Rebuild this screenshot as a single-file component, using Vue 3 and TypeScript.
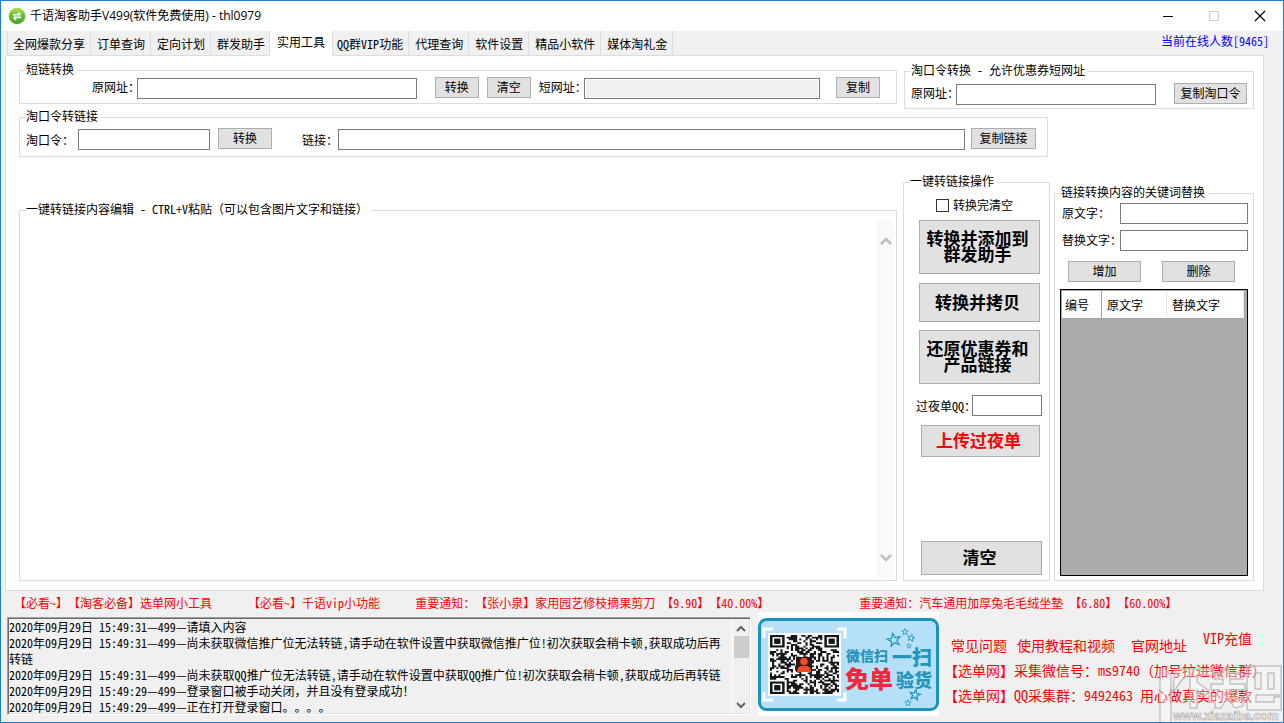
<script setup lang="ts">
import { h, ref } from 'vue'

interface QrCell {
  x: number
  y: number
}

// Latin runs are set in half-width glyphs, two to one ideograph.
const Mixed = (props: { text: string }) =>
  props.text
    .split(/([!-~]+(?: +[!-~]+)*| +)/)
    .filter((part) => part !== '')
    .map((part) => (/^[ -~]+$/.test(part) ? h('span', { class: 'half' }, part) : part))
Mixed.props = ['text']

const tabs: string[] = [
  '全网爆款分享',
  '订单查询',
  '定向计划',
  '群发助手',
  '实用工具',
  'QQ群VIP功能',
  '代理查询',
  '软件设置',
  '精品小软件',
  '媒体淘礼金',
]
const activeTab = ref(4)

const longUrl = ref('')
const shortUrl = ref('')
const couponUrl = ref('')
const token = ref('')
const tokenLink = ref('')
const editorText = ref('')
const clearAfter = ref(false)
const overnightQq = ref('')
const sourceWord = ref('')
const targetWord = ref('')

const notices: string[] = [
  '【必看~】【淘客必备】选单网小工具',
  '【必看~】千语vip小功能',
  '重要通知：【张小泉】家用园艺修枝摘果剪刀 【9.90】【40.00%】',
  '重要通知：汽车通用加厚兔毛毛绒坐墊 【6.80】【60.00%】',
]

const logLines: string[] = [
  '2020年09月29日 15:49:31—499—请填入内容',
  '2020年09月29日 15:49:31—499—尚未获取微信推广位无法转链,请手动在软件设置中获取微信推广位!初次获取会稍卡顿,获取成功后再转链',
  '2020年09月29日 15:49:31—499—尚未获取QQ推广位无法转链,请手动在软件设置中获取QQ推广位!初次获取会稍卡顿,获取成功后再转链',
  '2020年09月29日 15:49:29—499—登录窗口被手动关闭，并且没有登录成功！',
  '2020年09月29日 15:49:29—499—正在打开登录窗口。。。。',
]

const QR_SIZE = 33

function inFinder(x: number, y: number): boolean {
  const edge = QR_SIZE - 8
  return (x < 8 && y < 8) || (x >= edge && y < 8) || (x < 8 && y >= edge)
}

function inCentre(x: number, y: number): boolean {
  return x > 12 && x < 20 && y > 12 && y < 20
}

function buildQr(): QrCell[] {
  const cells: QrCell[] = []
  let seed = 9465
  for (let y = 0; y < QR_SIZE; y++) {
    for (let x = 0; x < QR_SIZE; x++) {
      seed = (seed * 1103515245 + 12345) % 2147483648
      if (!inFinder(x, y) && !inCentre(x, y) && seed / 2147483648 < 0.52) cells.push({ x, y })
    }
  }
  return cells
}

const qrPath = buildQr()
  .map((c) => `M${c.x} ${c.y}h1v1h-1z`)
  .join('')
const finders: QrCell[] = [
  { x: 0, y: 0 },
  { x: QR_SIZE - 7, y: 0 },
  { x: 0, y: QR_SIZE - 7 },
]
const starPath = 'M0-10L2.6-3.2 9.5-3.1 4 1.2 5.9 8.1 0 4.1-5.9 8.1-4 1.2-9.5-3.1-2.6-3.2Z'
</script>

<template>
  <div class="window">
    <header class="titlebar">
      <svg class="app-icon" width="18" height="18" viewBox="0 0 18 18" aria-hidden="true">
        <defs>
          <linearGradient id="ball" x1="0" y1="0" x2="0" y2="1">
            <stop offset="0" stop-color="#b4dc4a" />
            <stop offset="0.5" stop-color="#62bd36" />
            <stop offset="1" stop-color="#3fa32c" />
          </linearGradient>
        </defs>
        <circle cx="9" cy="9" r="8.3" fill="url(#ball)" />
        <path d="M5 7.8h7.4M10 5.4l2.6 2.4M13 10.4H5.6M8 12.8l-2.6-2.4" fill="none" stroke="#fff" stroke-width="1.6" />
      </svg>
      <h1 class="title">千语淘客助手V499(软件免费使用) - thl0979</h1>
      <div class="controls">
        <button type="button" class="ctl" aria-label="最小化">
          <svg width="12" height="12" viewBox="0 0 12 12"><path d="M1 6.5h10" stroke="#000" fill="none" /></svg>
        </button>
        <button type="button" class="ctl" aria-label="最大化" disabled>
          <svg width="12" height="12" viewBox="0 0 12 12"><path d="M1.5 1.5h9v9h-9z" stroke="#ccc" fill="none" /></svg>
        </button>
        <button type="button" class="ctl" aria-label="关闭">
          <svg width="12" height="12" viewBox="0 0 12 12"><path d="M1 1l10 10M11 1L1 11" stroke="#000" stroke-width="1.2" fill="none" /></svg>
        </button>
      </div>
    </header>

    <div class="tabbar">
      <nav class="tabs" role="tablist">
        <button
          v-for="(tab, i) in tabs"
          :key="tab"
          type="button"
          role="tab"
          class="tab"
          :class="{ active: i === activeTab }"
          :aria-selected="i === activeTab"
          @click="activeTab = i"
        ><Mixed :text="tab" /></button>
      </nav>
      <span class="online"><Mixed text="当前在线人数[9465]" /></span>
    </div>

    <main class="page">
      <div class="line line-top">
        <fieldset class="group short-link">
          <legend>短链转换</legend>
          <div class="row">
            <label for="long-url">原网址：</label>
            <input id="long-url" v-model="longUrl" type="text" class="w-280" />
            <button type="button" class="btn b-44 gap-18">转换</button>
            <button type="button" class="btn b-44 gap-8">清空</button>
            <label for="short-url" class="gap-8">短网址：</label>
            <input id="short-url" v-model="shortUrl" type="text" class="w-235 locked" readonly />
            <button type="button" class="btn b-44 gap-16">复制</button>
          </div>
        </fieldset>
        <fieldset class="group coupon">
          <legend><Mixed text="淘口令转换 - 允许优惠券短网址" /></legend>
          <div class="row">
            <label for="coupon-url">原网址：</label>
            <input id="coupon-url" v-model="couponUrl" type="text" class="fill" />
            <button type="button" class="btn b-73 gap-18">复制淘口令</button>
          </div>
        </fieldset>
      </div>

      <fieldset class="group token">
        <legend>淘口令转链接</legend>
        <div class="row">
          <label for="token">淘口令：</label>
          <input id="token" v-model="token" type="text" class="w-132" />
          <button type="button" class="btn b-54 gap-8">转换</button>
          <label for="token-link" class="gap-30">链接：</label>
          <input id="token-link" v-model="tokenLink" type="text" class="fill" />
          <button type="button" class="btn b-65 gap-6">复制链接</button>
        </div>
      </fieldset>

      <div class="line line-main">
        <fieldset class="group editor">
          <legend><Mixed text="一键转链接内容编辑 - CTRL+V粘贴（可以包含图片文字和链接）" /></legend>
          <div class="editor-body">
            <textarea v-model="editorText" aria-label="一键转链接内容编辑"></textarea>
            <div class="scroll pale" aria-hidden="true">
              <svg width="12" height="8" viewBox="0 0 12 8"><path d="M1 7l5-5 5 5" fill="none" stroke="#bfbfbf" stroke-width="2.6" /></svg>
              <svg width="12" height="8" viewBox="0 0 12 8"><path d="M1 1l5 5 5-5" fill="none" stroke="#bfbfbf" stroke-width="2.6" /></svg>
            </div>
          </div>
        </fieldset>

        <fieldset class="group ops">
          <legend>一键转链接操作</legend>
          <div class="ops-body">
            <label class="check"><input v-model="clearAfter" type="checkbox" />转换完清空</label>
            <button type="button" class="btn big tall">转换并添加到<br />群发助手</button>
            <button type="button" class="btn big mid">转换并拷贝</button>
            <button type="button" class="btn big tall">还原优惠券和<br />产品链接</button>
            <div class="qq-row">
              <label for="qq"><Mixed text="过夜单QQ：" /></label>
              <input id="qq" v-model="overnightQq" type="text" class="fill" />
            </div>
            <button type="button" class="btn big upload">上传过夜单</button>
            <button type="button" class="btn big clear">清空</button>
          </div>
        </fieldset>

        <fieldset class="group replace">
          <legend>链接转换内容的关键词替换</legend>
          <div class="replace-body">
            <div class="pair">
              <label for="src-word">原文字：</label>
              <input id="src-word" v-model="sourceWord" type="text" />
            </div>
            <div class="pair">
              <label for="dst-word">替换文字：</label>
              <input id="dst-word" v-model="targetWord" type="text" />
            </div>
            <div class="pair-buttons">
              <button type="button" class="btn b-73">增加</button>
              <button type="button" class="btn b-73">删除</button>
            </div>
            <div class="grid">
              <table>
                <thead>
                  <tr>
                    <th class="c-no">编号</th>
                    <th class="c-src">原文字</th>
                    <th class="c-dst">替换文字</th>
                  </tr>
                </thead>
              </table>
            </div>
          </div>
        </fieldset>
      </div>
    </main>

    <div class="notices">
      <a v-for="n in notices" :key="n" href="#"><Mixed :text="n" /></a>
    </div>

    <footer class="bottom">
      <div class="log">
        <div class="log-text" role="log" aria-label="运行日志">
          <p v-for="(l, i) in logLines" :key="i"><Mixed :text="l" /></p>
        </div>
        <div class="scroll" aria-hidden="true">
          <svg width="10" height="7" viewBox="0 0 10 7"><path d="M1 6l4-4 4 4" fill="none" stroke="#606060" stroke-width="2" /></svg>
          <div class="thumb"></div>
          <svg width="10" height="7" viewBox="0 0 10 7"><path d="M1 1l4 4 4-4" fill="none" stroke="#606060" stroke-width="2" /></svg>
        </div>
      </div>

      <svg class="banner" width="181" height="104" viewBox="0 0 181 104" role="img" aria-label="微信扫一扫 免单验货">
        <rect width="181" height="104" fill="#fff" />
        <rect x="1.5" y="7.5" width="178" height="90" rx="7" fill="#b5e0f8" stroke="#1c93bd" stroke-width="3" />
        <path d="M6 26V17h9M79 17h8v9M87 80v8h-8M15 88H6v-8" fill="none" stroke="#fff" stroke-width="3" />
        <rect x="10" y="21" width="73" height="63" fill="#fff" />
        <svg x="12" y="23" width="69" height="59" viewBox="0 0 33 33" preserveAspectRatio="none">
          <path :d="qrPath" fill="#15171a" />
          <g v-for="(f, i) in finders" :key="i">
            <rect :x="f.x + 0.6" :y="f.y + 0.6" width="5.8" height="5.8" fill="none" stroke="#15171a" stroke-width="1.2" />
            <rect :x="f.x + 2" :y="f.y + 2" width="3" height="3" fill="#15171a" />
          </g>
        </svg>
        <rect x="38" y="45" width="16" height="15" fill="#2a1512" />
        <circle cx="46" cy="49.5" r="3.8" fill="#f04b26" />
        <path d="M39 60c0-4 2-6 5-6h4c3 0 5 2 5 6z" fill="#f04b26" />
        <text class="bt" x="88" y="49" font-size="14">微信扫</text>
        <text class="bt" x="134" y="53" font-size="20">一扫</text>
        <text class="bt red" x="87" y="76" font-size="24">免单</text>
        <text class="bt" x="138" y="75" font-size="18">验货</text>
        <g fill="none" stroke="#1c93bd">
          <path :d="starPath" transform="translate(136 28) rotate(-12) scale(.68)" stroke-width="1.8" />
          <path :d="starPath" transform="translate(147 20) scale(.34)" stroke-width="2.2" />
          <path :d="starPath" transform="translate(153 26) rotate(15) scale(.38)" stroke-width="2.2" />
          <path :d="starPath" transform="translate(151 34) scale(.26)" stroke-width="2.4" />
          <path :d="starPath" transform="translate(157 83) rotate(10) scale(.55)" stroke-width="2.2" />
          <path :d="starPath" transform="translate(150 91) scale(.34)" stroke-width="2.2" />
        </g>
      </svg>

      <div class="contact">
        <nav class="quick">
          <a href="#">常见问题</a>
          <a href="#">使用教程和视频</a>
          <a href="#">官网地址</a>
          <a href="#" class="vip"><Mixed text="VIP充值" /></a>
        </nav>
        <p><Mixed text="【选单网】采集微信号：ms9740（加号拉进微信群）" /></p>
        <p><Mixed text="【选单网】QQ采集群：9492463 用心做真实的爆款" /></p>
      </div>
    </footer>

    <svg class="mark" width="124" height="60" viewBox="0 0 124 60" aria-hidden="true">
      <g fill="#fff" fill-opacity=".3" stroke="#b4b4b4" stroke-opacity=".8" stroke-width="1.4">
        <path d="M1 60V7H6L12 14V60" />
        <path d="M16 7H54V13H38V20L50 29 46 34 38 28V46H31V14H26L14 30Z" />
        <path d="M55 11H64V6H70V11H84V17H71V22H86V28H72L78 38 84 34V44L76 46 68 36 62 46H56V40H50V34H56L60 28H52V22H64V17H55Z" />
        <path fill-rule="evenodd" d="M88 4H122V33H97V40H115V35H122V48H88ZM96 11V27H102V11ZM109 11V27H115V11Z" />
      </g>
      <text x="14" y="58">www.xiazaiba.com</text>
    </svg>
  </div>
</template>

<style>
body {
  margin: 0;
}

.half {
  font-feature-settings: "hwid" 1;
}
</style>

<style scoped>
* {
  box-sizing: border-box;
}

.window {
  position: relative;
  display: flex;
  flex-direction: column;
  min-height: 100vh;
  border: 1px solid #1a7fd4;
  background: #f0f0f0;
  color: #000;
  font-family: "Noto Sans CJK SC", sans-serif;
  font-size: 12px;
  line-height: 14px;
  text-spacing-trim: space-all;
  text-autospace: no-autospace;
  overflow: hidden;
}

button,
input,
textarea {
  font: inherit;
  color: inherit;
  margin: 0;
  border-radius: 0;
}

a {
  color: #f00;
  text-decoration: none;
}

p {
  margin: 0;
}

/* title bar */
.titlebar {
  display: flex;
  align-items: center;
  height: 30px;
  padding: 0 11px 0 7px;
  background: #fff;
}

.title {
  margin: 0 auto 0 4px;
  font-family: "Open Sans", "Noto Sans CJK SC", sans-serif;
  font-size: 12px;
  font-weight: 400;
  white-space: nowrap;
}

.controls {
  display: flex;
  gap: 22px;
}

.ctl {
  display: flex;
  align-items: center;
  justify-content: center;
  width: 24px;
  height: 24px;
  padding: 0;
  border: 0;
  background: none;
}

/* tabs */
.tabbar {
  display: flex;
  justify-content: space-between;
  height: 24px;
  padding: 0 14px 0 6px;
}

.tabs {
  display: flex;
}

.tab {
  height: 24px;
  padding: 2px 5px 0 6px;
  border: 0;
  border-right: 1px solid #dcdcdc;
  background: #f0f0f0;
  white-space: nowrap;
}

.tab:first-child {
  padding-left: 5px;
  border-left: 1px solid #dcdcdc;
}

.tab.active {
  position: relative;
  z-index: 1;
  height: 25px;
  margin: 0 -2px;
  padding: 0 7px 3px;
  border-left: 1px solid #dcdcdc;
  background: #fff;
}

.online {
  padding-top: 3px;
  color: #00f;
}

/* tab page */
.page {
  flex: 1;
  display: flex;
  flex-direction: column;
  margin: 0 19px 0 4px;
  padding: 7px 9px 9px 13px;
  border: 1px solid #dcdcdc;
  background: #fff;
}

.line {
  display: flex;
}

.line-top {
  gap: 7px;
}

.line-main {
  flex: 1;
  margin-top: 18px;
}

.group {
  min-width: 0;
  margin: 0;
  padding: 0;
  border: 1px solid #dcdcdc;
}

legend {
  margin-left: 6px;
  padding: 0 3px 2px 0;
  line-height: 12px;
  white-space: nowrap;
}

.row {
  display: flex;
  align-items: flex-end;
  height: 22px;
}

label {
  flex: none;
  white-space: nowrap;
}

.row label {
  line-height: 20px;
  align-self: flex-start;
  margin-right: -3px;
}

input[type="text"] {
  min-width: 0;
  height: 21px;
  padding: 0 3px;
  border: 1px solid #7a7a7a;
  background: #fff;
}

input[type="text"].locked {
  background: #f0f0f0;
  box-shadow: inset 0 0 0 1px #fff;
}

.w-280 {
  flex: 280 1 0;
}

.w-235 {
  flex: 235 1 0;
}

.w-132 {
  width: 132px;
}

.fill {
  flex: 1;
}

.btn {
  flex: none;
  height: 21px;
  padding: 0 0 1px;
  border: 1px solid #adadad;
  background: #e1e1e1;
  white-space: nowrap;
}

.row .btn {
  align-self: flex-start;
}

.b-44 {
  width: 44px;
}

.b-54 {
  width: 54px;
}

.b-65 {
  width: 65px;
}

.b-73 {
  width: 73px;
}

.gap-6 {
  margin-left: 6px;
}

.gap-8 {
  margin-left: 8px;
}

.gap-16 {
  margin-left: 16px;
}

.gap-18 {
  margin-left: 18px;
}

.gap-30 {
  margin-left: 30px;
}

.short-link {
  flex: 1;
  height: 41px;
}

.short-link .row {
  padding: 0 16px 0 72px;
}

.coupon {
  flex: none;
  width: 350px;
  height: 45px;
  margin-top: 1px;
}

.coupon .row {
  padding: 0 6px;
  margin-top: 5px;
}

.token {
  height: 47px;
  margin: 1px 206px 0 0;
}

.token .row {
  margin-top: 4px;
  padding: 0 11px 0 6px;
}

.token .row label {
  margin-right: 0;
  line-height: 24px;
}

.token .row label:first-child {
  margin-right: 4px;
}

/* editor */
.editor {
  flex: 1;
  margin: 28px 6px 0 0;
}

.editor-body {
  display: flex;
  height: 100%;
  padding: 3px 2px 2px 1px;
}

textarea {
  flex: 1;
  min-width: 0;
  padding: 0;
  border: 0;
  background: transparent;
  resize: none;
  outline: none;
  overflow: hidden;
}

.scroll {
  display: flex;
  flex-direction: column;
  align-items: center;
  flex: none;
  width: 17px;
}

.pale {
  justify-content: space-between;
  padding: 17px 0 16px;
  background: #f9f9f9;
}

/* operations */
.ops {
  flex: none;
  width: 147px;
  margin-right: 4px;
}

.ops-body {
  display: flex;
  flex-direction: column;
  height: 100%;
  padding: 8px 7px 5px 15px;
}

.check {
  display: flex;
  align-items: center;
  gap: 4px;
  height: 16px;
  margin: 0 0 7px 17px;
}

.check input {
  appearance: none;
  width: 13px;
  height: 13px;
  border: 1px solid #333;
  background: #fff;
}

.check input:checked {
  box-shadow: inset 0 0 0 2px #fff;
  background: #333;
}

.big {
  width: 121px;
  padding: 0 4px 2px 0;
  font-size: 17px;
  font-weight: 700;
  line-height: 16px;
}

.tall {
  height: 54px;
}

.mid {
  height: 39px;
  margin: 9px 0 8px;
}

.qq-row {
  display: flex;
  align-items: center;
  margin: 11px 0 9px -3px;
}

.qq-row label {
  margin-right: -4px;
}

.upload {
  width: 119px;
  height: 32px;
  margin-left: 2px;
  color: #f00;
}

.clear {
  height: 34px;
  margin: auto 0 0 2px;
}

/* replacement list */
.replace {
  flex: none;
  width: 200px;
  margin-top: 11px;
}

.replace-body {
  display: flex;
  flex-direction: column;
  height: 100%;
  padding: 3px 5px 4px;
}

.pair {
  display: flex;
  justify-content: space-between;
  margin-bottom: 6px;
  padding-left: 2px;
  line-height: 20px;
}

.pair input {
  width: 128px;
}

.pair label {
  margin-right: -2px;
}

.pair-buttons {
  display: flex;
  justify-content: space-between;
  margin: 4px 13px 7px 8px;
}

.grid {
  flex: 1;
  padding: 1px 3px 1px 1px;
  border: 1px solid #000;
  background: #ababab;
}

table {
  width: 100%;
  border-collapse: separate;
  border-spacing: 0;
  table-layout: fixed;
}

th {
  height: 28px;
  padding: 0 5px;
  border-right: 1px solid #e5e5e5;
  border-bottom: 1px solid #a0a0a0;
  background: #fff;
  font-weight: 400;
  text-align: left;
}

.c-no {
  width: 40px;
  padding: 0 3px;
  border-right-color: #a0a0a0;
}

.c-src {
  width: 65px;
}

/* notices */
.notices {
  display: flex;
  height: 21px;
  padding: 5px 0 0 13px;
  white-space: nowrap;
}

.notices a:nth-child(2) {
  margin-left: 36px;
}

.notices a:nth-child(3) {
  margin-left: 35px;
}

.notices a:nth-child(4) {
  margin-left: 90px;
}

/* bottom */
.bottom {
  display: flex;
  height: 110px;
  padding: 0 0 6px 6px;
}

.log {
  flex: 1;
  display: flex;
  min-width: 0;
  height: 98px;
  margin: 5px 7px 0 0;
  border: 1px solid;
  border-color: #a0a0a0 #fff #fff #a0a0a0;
  box-shadow: inset 1px 1px #696969, inset -1px -1px #e3e3e3;
}

.log-text {
  flex: 1;
  min-width: 0;
  padding: 1px 0 0 1px;
  line-height: 16px;
  overflow: hidden;
}

.log .scroll {
  margin: 1px;
  padding: 6px 0 4px;
  border-left: 1px solid #fff;
}

.log .scroll svg:last-child {
  margin-top: auto;
}

.thumb {
  width: 15px;
  height: 22px;
  margin-top: 4px;
  background: #cdcdcd;
}

.banner {
  flex: none;
}

.bt {
  fill: #2694bd;
  font-weight: 900;
}

.bt.red {
  fill: #f0283c;
}

.contact {
  flex: none;
  width: 339px;
  margin-left: 5px;
  color: #f00;
  font-size: 14px;
  line-height: 25px;
  white-space: nowrap;
}

.quick {
  display: flex;
  align-items: flex-end;
  height: 32px;
  margin-top: 14px;
  padding-left: 7px;
}

.quick a:nth-child(2) {
  margin-left: 10px;
}

.quick a:nth-child(n + 3) {
  margin-left: 16px;
}

.quick .vip {
  align-self: flex-start;
}

/* corner logo drawn over the contact lines */
.mark {
  position: absolute;
  right: 0;
  bottom: 0;
  pointer-events: none;
}

.mark text {
  fill: #fff;
  fill-opacity: 0.6;
  stroke: #aaa;
  stroke-width: 0.6;
  font-family: "Liberation Sans", sans-serif;
  font-size: 12px;
  font-weight: 700;
}
</style>
